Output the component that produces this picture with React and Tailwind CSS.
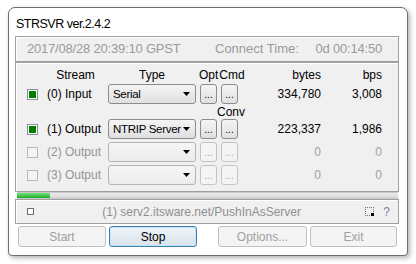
const rows = [
  { label: '(0) Input', type: 'Serial', bytes: '334,780', bps: '3,008', on: true },
  { label: '(1) Output', type: 'NTRIP Server', bytes: '223,337', bps: '1,986', on: true },
  { label: '(2) Output', type: '', bytes: '0', bps: '0', on: false },
  { label: '(3) Output', type: '', bytes: '0', bps: '0', on: false },
]

function Check({ on }) {
  return on ? (
    <div className="w-[11px] h-[11px] border border-[#8e8e8e] bg-white p-[1px]">
      <div className="w-full h-full bg-[#008000]" />
    </div>
  ) : (
    <div className="w-[11px] h-[11px] border border-[#b8b8b8] bg-[#f4f4f4]" />
  )
}

function Arrow() {
  return (
    <svg width="7" height="4" viewBox="0 0 7 4" className="absolute right-[5px] top-[7px]">
      <path d="M0 0H7L3.5 4Z" fill="#000" />
    </svg>
  )
}

function Row({ r, className = '' }) {
  return (
    <div className={`flex items-center h-[20px] whitespace-nowrap ${className}`}>
      <div className="ml-[11px]"><Check on={r.on} /></div>
      <div className={`ml-[9px] w-[61px] ${r.on ? 'text-black' : 'text-[#959595]'}`}>{r.label}</div>
      <div className={`relative w-[88px] h-[20px] flex items-center rounded-[3px] pl-[4px] border ${r.on ? 'border-[#8c8c8c] bg-gradient-to-b from-[#f4f4f4] to-[#e0e0e0]' : 'border-[#b4b4b4] bg-gradient-to-b from-[#f6f6f6] to-[#ececec]'}`}>
        <span className="text-[11.5px] tracking-[-0.3px]">{r.type}</span>
        <Arrow />
      </div>
      {[0, 1].map(i => (
        <div key={i} className={`ml-[4px] w-[17px] h-[20px] flex items-end justify-center pb-[3px] rounded-[3px] border text-[10px] leading-[10px] ${r.on ? 'border-[#8c8c8c] bg-gradient-to-b from-[#f4f4f4] to-[#e0e0e0] text-black' : 'border-[#c4c4c4] bg-[#f4f4f4] text-[#a8a8a8]'}`}>...</div>
      ))}
      <div className={`w-[83px] text-right ${r.on ? 'text-black' : 'text-[#a0a0a0]'}`}>{r.bytes}</div>
      <div className={`w-[61px] text-right ${r.on ? 'text-black' : 'text-[#a0a0a0]'}`}>{r.bps}</div>
    </div>
  )
}

function Btn({ children, w, active, className = '' }) {
  return (
    <div className={`${w} h-[21px] flex items-center justify-center rounded-[3px] border ${active ? 'border-[#3c7fb1] bg-gradient-to-b from-[#eef4f9] to-[#d9e2ea] text-black shadow-[inset_0_0_0_1px_#c4e5f6]' : 'border-[#bfbfbf] bg-[#f4f4f4] text-[#a0a0a0]'} ${className}`}>
      {children}
    </div>
  )
}

export default function App() {
  return (
    <div className="w-[416px] h-[264px] bg-white overflow-hidden text-[12px] leading-[14px]" style={{ fontFamily: '"Liberation Sans", Arial, sans-serif' }}>
      <div className="ml-[8px] mt-[7px] w-[400px] h-[249px] border border-[#6e6e6e] rounded-t-[7px] rounded-b-[4px] bg-white shadow-[2px_2px_5px_rgba(0,0,0,0.3)] flex flex-col">
        <div className="h-[28px] pl-[7px] pt-[9px] text-[12.5px] tracking-[-0.5px] text-black">STRSVR ver.2.4.2</div>

        <div className="ml-[6px] w-[384px] flex flex-col">
          {/* time */}
          <div className="h-[26px] flex items-center border border-[#a0a0a0] bg-[#f0f0f0] shadow-[inset_1px_1px_0_#fff] text-[#9a9a9a] text-[13px] whitespace-nowrap">
            <span className="ml-[11px] w-[188px] tracking-[-0.2px]">2017/08/28 20:39:10 GPST</span>
            <span>Connect Time:</span>
            <span className="ml-auto mr-[16px] tracking-[-0.2px]">0d 00:14:50</span>
          </div>

          {/* streams */}
          <div className="h-[130px] border border-[#a0a0a0] bg-[#f0f0f0] shadow-[inset_1px_1px_0_#fff] flex flex-col">
            <div className="flex items-center h-[14px] mt-[5px]">
              <div className="ml-[11px] w-[81px] pl-[16px] text-center">Stream</div>
              <div className="w-[88px] text-center">Type</div>
              <div className="w-[42px] pl-[3px] flex gap-[1px]"><span>Opt</span><span>Cmd</span></div>
              <div className="w-[83px] text-right">bytes</div>
              <div className="w-[61px] text-right">bps</div>
            </div>
            <Row r={rows[0]} className="mt-[2px]" />
            <div className="h-[15px] flex items-center pl-[201px]">Conv</div>
            <Row r={rows[1]} />
            <Row r={rows[2]} className="mt-[3px]" />
            <Row r={rows[3]} className="mt-[3px]" />
          </div>

          {/* progress */}
          <div className="h-[7px] ml-[2px] w-[381px] flex border-y border-[#c8c8c8] bg-gradient-to-b from-[#ececec] to-[#d6d6d6]">
            <div className="w-[33px] bg-gradient-to-b from-[#6fe07a] to-[#0fae24]" />
          </div>

          {/* status */}
          <div className="h-[25px] flex items-center border border-[#a0a0a0] bg-[#f0f0f0] shadow-[inset_1px_1px_0_#fff]">
            <div className="ml-[11px] w-[7px] h-[7px] border border-[#6e6e6e] bg-white" />
            <div className="flex-1 text-center text-[#8f8f8f] pl-[4px]">(1) serv2.itsware.net/PushInAsServer</div>
            <div className="relative w-[9px] h-[9px] border border-dotted border-[#707070]">
              <div className="absolute right-[-1px] bottom-[-1px] w-[3px] h-[3px] bg-black" />
            </div>
            <span className="ml-[9px] mr-[8px] text-[#8080a0]">?</span>
          </div>

          {/* buttons */}
          <div className="flex mt-[2px]">
            <Btn w="w-[88px]" className="ml-[3px]">Start</Btn>
            <Btn w="w-[88px]" active className="ml-[3px]">Stop</Btn>
            <Btn w="w-[89px]" className="ml-[21px]">Options...</Btn>
            <Btn w="w-[87px]" className="ml-[3px]">Exit</Btn>
          </div>
        </div>
      </div>
    </div>
  )
}
